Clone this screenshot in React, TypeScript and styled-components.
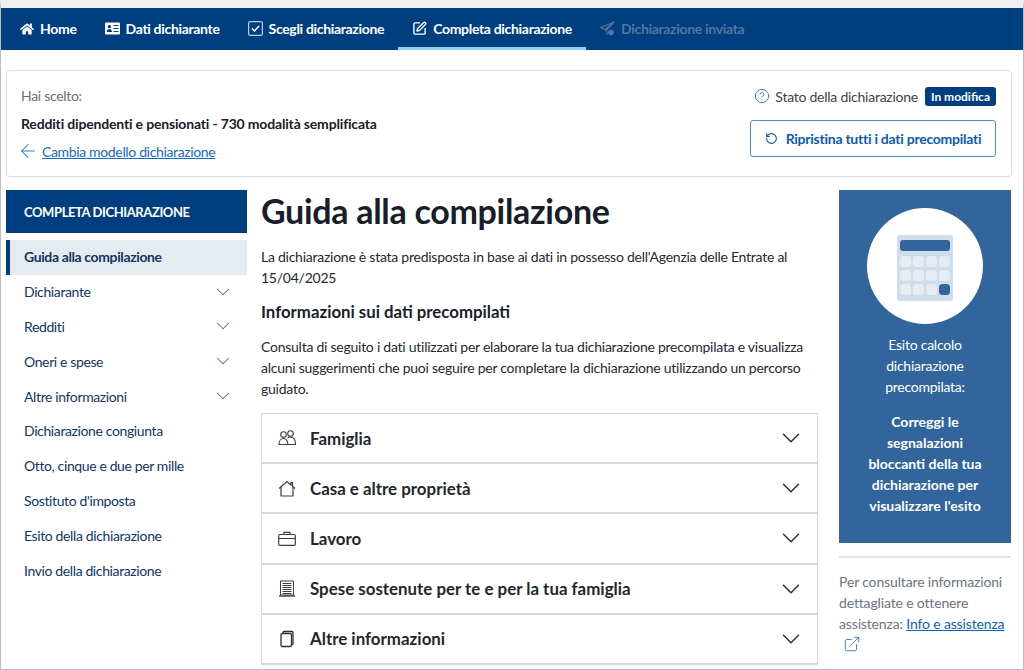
import React from 'react';
import styled, { createGlobalStyle } from 'styled-components';
import { ChevronDown, ArrowLeft, RotateCw, CircleHelp, SquarePen, ExternalLink } from 'lucide-react';
import { FaHome } from 'react-icons/fa';

const GlobalStyle = createGlobalStyle`
  html, body { margin: 0; padding: 0; background: #fff; }
  body { font-family: Lato, "Noto Sans", sans-serif; width: 1024px; height: 670px; overflow: hidden; }
  * { box-sizing: border-box; }
`;

const Page = styled.div`
  width: 1024px;
  height: 670px;
  overflow: hidden;
  border-left: 1px solid #bdbdbd;
  border-right: 1px solid #bdbdbd;
  border-bottom: 1px solid #bdbdbd;
  border-top: 8px solid #efefef;
`;

const NavBar = styled.nav`
  height: 42px;
  background: #003f7f;
  display: flex;
  padding-left: 5px;
`;

const NavItem = styled.div<{ $active?: boolean; $off?: boolean }>`
  display: flex;
  align-items: center;
  gap: 6px;
  padding: 2px 14px 0;
  height: 42px;
  color: ${p => (p.$off ? '#54759f' : '#fff')};
  font-size: 14px;
  letter-spacing: -0.32px;
  font-weight: 700;
  border-bottom: 3px solid ${p => (p.$active ? '#8fd0fb' : 'transparent')};
  white-space: nowrap;
`;

const ChoiceCard = styled.section`
  margin: 20px 11px 0 5px;
  height: 107px;
  border: 1px solid #d9dde2;
  border-radius: 4px;
  display: flex;
  justify-content: space-between;
  padding: 0 15px 0 14px;
`;

const ChoiceInfo = styled.div`
  display: flex;
  flex-direction: column;
  padding-top: 15px;
`;

const Muted = styled.div`
  font-size: 14px;
  letter-spacing: -0.3px;
  color: #6a6f75;
  height: 20px;
  line-height: 20px;
`;

const Chosen = styled.div`
  margin-top: 8px;
  font-size: 14px;
  letter-spacing: -0.17px;
  font-weight: 700;
  color: #17202a;
  height: 20px;
  line-height: 20px;
`;

const BackLink = styled.div`
  margin-top: 7px;
  display: flex;
  align-items: center;
  gap: 3px;
  color: #3b7cc4;
  font-size: 14px;
  letter-spacing: -0.35px;
  height: 20px;
  a { color: #1a68b8; text-decoration: underline; }
  svg { margin-left: -4px; }
`;

const StatusColumn = styled.div`
  display: flex;
  flex-direction: column;
  align-items: flex-end;
  padding-top: 14px;
`;

const StatusRow = styled.div`
  display: flex;
  align-items: center;
  font-size: 14px;
  letter-spacing: -0.25px;
  color: #3d434a;
  height: 22px;
`;

const HelpMark = styled.span`
  display: flex;
  margin-right: 5px;
  color: #3b82c8;
`;

const Badge = styled.span`
  background: #003f7f;
  color: #fff;
  font-size: 12px;
  letter-spacing: 0;
  font-weight: 700;
  padding: 2px 6px;
  border-radius: 3px;
  margin-left: 7px;
`;

const RestoreButton = styled.button`
  margin-top: 13px;
  width: 246px;
  height: 37px;
  background: #fff;
  border: 1px solid #4a8fd6;
  border-radius: 3px;
  display: flex;
  align-items: center;
  justify-content: center;
  gap: 8px;
  color: #0b5cad;
  font: 700 14px Lato, "Noto Sans", sans-serif;
  letter-spacing: -0.25px;
`;

const Columns = styled.div`
  display: grid;
  grid-template-columns: 241px 557px 172px;
  column-gap: 14px;
  margin: 13px 0 0 5px;
`;

const SideHead = styled.div`
  height: 43px;
  background: #003f7f;
  color: #fff;
  font-size: 13px;
  letter-spacing: -0.4px;
  font-weight: 700;
  display: flex;
  align-items: center;
  padding-left: 18px;
  text-transform: uppercase;
`;

const SideList = styled.div`
  margin-top: 7px;
  display: flex;
  flex-direction: column;
`;

const SideItem = styled.div<{ $active?: boolean }>`
  height: 34.8px;
  display: flex;
  align-items: center;
  justify-content: space-between;
  padding: 0 13px 1px ${p => (p.$active ? '14px' : '18px')};
  font-size: 14px;
  letter-spacing: -0.38px;
  color: #12365f;
  font-weight: ${p => (p.$active ? 700 : 400)};
  background: ${p => (p.$active ? '#e6ebf2' : 'transparent')};
  border-left: ${p => (p.$active ? '4px solid #003f7f' : 'none')};
  svg { color: #4d6e93; }
`;

const Main = styled.main``;

const Title = styled.h1`
  margin: 0;
  font-size: 34px;
  letter-spacing: -0.3px;
  font-weight: 700;
  line-height: 42px;
  color: #17202a;
`;

const Para = styled.p<{ $tight?: boolean }>`
  margin: ${p => (p.$tight ? '12px' : '14px')} 0 0;
  font-size: 14px;
  letter-spacing: -0.25px;
  line-height: 21px;
  color: #24292f;
`;

const SubTitle = styled.h2`
  margin: 12px 0 0;
  font-size: 16.8px;
  font-weight: 700;
  line-height: 24px;
  color: #17202a;
`;

const Accordion = styled.div`
  margin-top: 14px;
  border: 1px solid #d4d9df;
  border-bottom: none;
`;

const AccordionRow = styled.div`
  height: 50.2px;
  display: flex;
  align-items: center;
  padding: 0 11px 0 16px;
  gap: 14px;
  border-bottom: 2px solid #d4d9df;
  font-size: 16.9px;
  font-weight: 700;
  color: #22272d;
  span { flex: 1; }
`;

const Aside = styled.aside`
  display: flex;
  flex-direction: column;
  margin-left: 7px;
  width: 172px;
`;

const ResultPanel = styled.div`
  height: 353px;
  background: #32659b;
  color: #fff;
  display: flex;
  flex-direction: column;
  align-items: center;
  padding: 18px 25px 0;
  text-align: center;
  font-size: 14px;
  letter-spacing: -0.25px;
  line-height: 21px;
`;

const Circle = styled.div`
  width: 116px;
  height: 116px;
  flex: none;
  border-radius: 50%;
  background: #fff;
  display: flex;
  align-items: center;
  justify-content: center;
  padding-top: 4px;
  margin-bottom: 10px;
`;

const ResultBold = styled.div`
  margin-top: 14px;
  font-weight: 700;
  letter-spacing: 0;
`;

const Separator = styled.hr`
  width: 100%;
  border: none;
  border-top: 2px solid #e1e4e8;
  margin: 13px 0 0;
`;

const AsideNote = styled.div`
  margin-top: 13px;
  font-size: 14px;
  letter-spacing: -0.15px;
  line-height: 21px;
  color: #6a7580;
  a { color: #0f62b8; text-decoration: underline; }
  svg { display: block; color: #3b82c8; margin: 1px 0 0 4px; }
`;

const IdCard = () => (
  <svg width="15" height="13" viewBox="0 0 15 13">
    <rect x="0" y="0.5" width="15" height="12" rx="1" fill="#fff" />
    <circle cx="4.4" cy="4.6" r="1.7" fill="#003f7f" />
    <path d="M1.800 10c0-2 1.200-3 2.600-3S7 8 7 10z" fill="#003f7f" />
    <path d="M8.500 3.500h5M8.500 6.500h5M8.500 9.500h5" stroke="#003f7f" strokeWidth="1.200" />
  </svg>
);

const CheckBoxIcon = () => (
  <svg width="15" height="15" viewBox="0 0 15 15" fill="none">
    <rect x="0.600" y="0.600" width="13.800" height="13.800" rx="1.500" stroke="#b9cde3" strokeWidth="1.200" />
    <path d="M4 7.500l2.500 2.500L11 5" stroke="#fff" strokeWidth="1.500" />
  </svg>
);

const SentIcon = () => (
  <svg width="15" height="15" viewBox="0 0 15 15" fill="none" stroke="#54759f" strokeWidth="1.200">
    <path d="M14 1L1 6.500l4 2L14 1zM14 1L6 9.500 7.500 14" />
    <circle cx="11" cy="11.500" r="2.200" fill="#54759f" />
  </svg>
);

const PeopleIcon = () => (
  <svg width="18" height="16" viewBox="0 0 18 16" fill="none" stroke="#3a3f45" strokeWidth="1.100">
    <circle cx="5.500" cy="4.500" r="2.800" />
    <circle cx="12.500" cy="3.500" r="2.800" />
    <path d="M1 14.500c0-3.500 2-6 4.500-6s4 2.500 4.500 6z" />
    <path d="M9.500 8c1-.8 2-1 3-1 3 0 5 2.500 5 7.500H10" />
  </svg>
);

const HouseIcon = () => (
  <svg width="18" height="17" viewBox="0 0 18 17" fill="none" stroke="#3a3f45" strokeWidth="1.200">
    <path d="M1 8.500L9 1.500l4 3.400V2.500h1.500v3.700L17 8.500" />
    <path d="M3 7v9h12V7" />
  </svg>
);

const CaseIcon = () => (
  <svg width="18" height="15" viewBox="0 0 18 15" fill="none" stroke="#3a3f45" strokeWidth="1.200">
    <rect x="0.700" y="3.500" width="16.600" height="10.800" rx="1" />
    <path d="M6 3.500V1.300h6v2.200M0.700 7.500h16.600" />
  </svg>
);

const NewsIcon = () => (
  <svg width="18" height="17" viewBox="0 0 18 17" fill="none" stroke="#3a3f45">
    <path d="M2.500 1h13v14h-13z" />
    <path d="M1 16h16" strokeWidth="1.400" />
    <path d="M4.500 3.500h9M4.500 5.500h9M4.500 7.500h9M4.500 9.500h9M4.500 11.500h9M4.500 13.500h9" strokeWidth="1.100" />
  </svg>
);

const CopyIcon = () => (
  <svg width="18" height="18" viewBox="0 0 18 18" fill="none" stroke="#2c3035" strokeWidth="1.300">
    <path d="M5 3.500V2.500c0-.6.500-1 1-1h8c.6 0 1 .4 1 1v11c0 .6-.4 1-1 1h-.8" />
    <rect x="3" y="3.500" width="10.500" height="13" rx="1.300" />
  </svg>
);

const Calculator = () => (
  <svg width="56" height="66" viewBox="0 0 56 66">
    <rect width="56" height="66" rx="3" fill="#cfdce9" />
    <rect x="3" y="5" width="50" height="11" rx="3" fill="#32659b" />
    {[0, 1, 2].map(r =>
      [0, 1, 2, 3].map(c => (
        <rect
          key={`${r}${c}`}
          x={3 + c * 13}
          y={21 + r * 14}
          width="11"
          height="11"
          rx="3.500"
          fill={r === 2 && c === 3 ? '#32659b' : '#e7ecf3'}
        />
      ))
    )}
  </svg>
);

const sideItems: [string, boolean][] = [
  ['Dichiarante', true],
  ['Redditi', true],
  ['Oneri e spese', true],
  ['Altre informazioni', true],
  ['Dichiarazione congiunta', false],
  ['Otto, cinque e due per mille', false],
  ["Sostituto d'imposta", false],
  ['Esito della dichiarazione', false],
  ['Invio della dichiarazione', false],
];

const sections: [React.ReactNode, string][] = [
  [<PeopleIcon />, 'Famiglia'],
  [<HouseIcon />, 'Casa e altre proprietà'],
  [<CaseIcon />, 'Lavoro'],
  [<NewsIcon />, 'Spese sostenute per te e per la tua famiglia'],
  [<CopyIcon />, 'Altre informazioni'],
];

export default function App() {
  return (
    <Page>
      <GlobalStyle />
      <NavBar>
        <NavItem><FaHome size={14} />Home</NavItem>
        <NavItem><IdCard />Dati dichiarante</NavItem>
        <NavItem><CheckBoxIcon />Scegli dichiarazione</NavItem>
        <NavItem $active><SquarePen size={15} strokeWidth={2.200} />Completa dichiarazione</NavItem>
        <NavItem $off><SentIcon />Dichiarazione inviata</NavItem>
      </NavBar>

      <ChoiceCard>
        <ChoiceInfo>
          <Muted>Hai scelto:</Muted>
          <Chosen>Redditi dipendenti e pensionati - 730 modalità semplificata</Chosen>
          <BackLink><ArrowLeft size={22} strokeWidth={1.100} /><a>Cambia modello dichiarazione</a></BackLink>
        </ChoiceInfo>
        <StatusColumn>
          <StatusRow>
            <HelpMark><CircleHelp size={16} strokeWidth={1.500} /></HelpMark>
            Stato della dichiarazione
            <Badge>In modifica</Badge>
          </StatusRow>
          <RestoreButton><RotateCw size={13} strokeWidth={2} style={{ transform: 'scaleX(-1)' }} />Ripristina tutti i dati precompilati</RestoreButton>
        </StatusColumn>
      </ChoiceCard>

      <Columns>
        <div>
          <SideHead>Completa dichiarazione</SideHead>
          <SideList>
            <SideItem $active>Guida alla compilazione</SideItem>
            {sideItems.map(([label, more]) => (
              <SideItem key={label}>
                {label}
                {more && <ChevronDown size={22} strokeWidth={1.100} />}
              </SideItem>
            ))}
          </SideList>
        </div>

        <Main>
          <Title>Guida alla compilazione</Title>
          <Para>La dichiarazione è stata predisposta in base ai dati in possesso dell'Agenzia delle Entrate al 15/04/2025</Para>
          <SubTitle>Informazioni sui dati precompilati</SubTitle>
          <Para $tight>Consulta di seguito i dati utilizzati per elaborare la tua dichiarazione precompilata e visualizza alcuni suggerimenti che puoi seguire per completare la dichiarazione utilizzando un percorso guidato.</Para>
          <Accordion>
            {sections.map(([icon, label]) => (
              <AccordionRow key={label}>
                {icon}
                <span>{label}</span>
                <ChevronDown size={30} strokeWidth={1.200} color="#2c3035" />
              </AccordionRow>
            ))}
          </Accordion>
        </Main>

        <Aside>
          <ResultPanel>
            <Circle><Calculator /></Circle>
            Esito calcolo dichiarazione precompilata:
            <ResultBold>Correggi le segnalazioni bloccanti della tua dichiarazione per visualizzare l'esito</ResultBold>
          </ResultPanel>
          <Separator />
          <AsideNote>
            Per consultare informazioni dettagliate e ottenere assistenza: <a>Info e assistenza</a>
            <ExternalLink size={18} strokeWidth={1.300} />
          </AsideNote>
        </Aside>
      </Columns>
    </Page>
  );
}
